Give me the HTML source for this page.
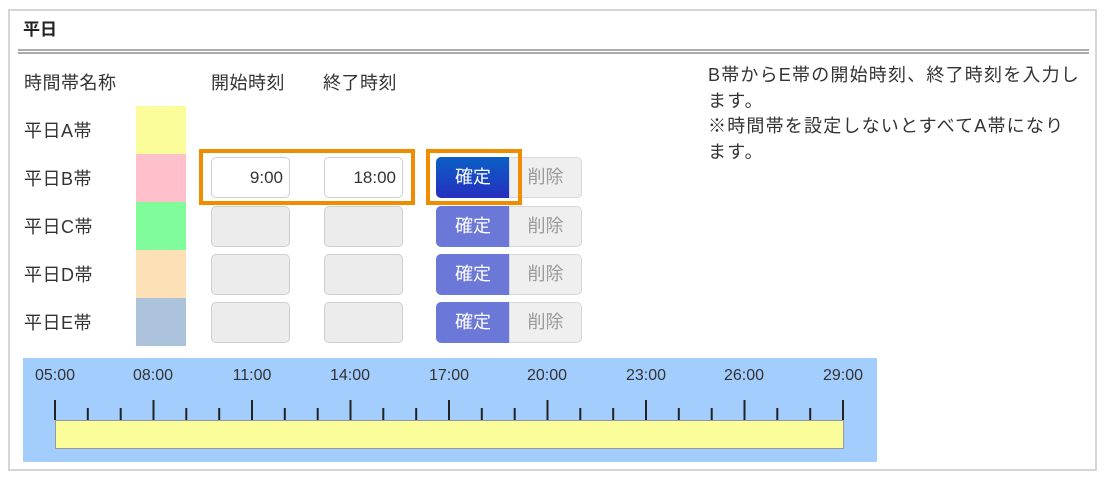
<!DOCTYPE html>
<html><head><meta charset="utf-8"><style>
*{margin:0;padding:0;box-sizing:border-box}
body{width:1105px;height:478px;background:#fff;position:relative;overflow:hidden;font-family:"Liberation Sans","Noto Sans CJK JP",sans-serif;color:#333;font-size:17px}
.a{position:absolute}
.box{left:8px;top:9px;width:1089px;height:462px;border:2px solid #d6d6d6}
.t{line-height:20px;font-size:18px;letter-spacing:0.5px;white-space:nowrap}
.sw{left:136px;width:50px;height:48px}
.inp{width:79px;height:41px;border:1px solid #cfcfcf;border-radius:5px;background:#ececec}
.inp.w{background:#fff;text-align:right;padding-right:6px;line-height:39px;font-size:17px;color:#333}
.ok{left:436px;width:74px;height:41px;background:#6b78d8;color:#fff;border-radius:5px 0 0 5px;text-align:center;line-height:41px;font-size:18px}
.del{left:509px;width:73px;height:41px;background:#efefef;border:1px solid #d8d8d8;border-radius:0 5px 5px 0;color:#999;text-align:center;line-height:39px;font-size:18px}
.or{border:4px solid #f08c00}
.tl{top:367px;font-size:16px;color:#333;width:60px;text-align:center}
</style></head><body>
<div class="a box"></div>
<div class="a t" style="left:23px;top:20px;font-weight:bold;font-size:17px;color:#222;letter-spacing:0">平日</div>
<div class="a" style="left:18px;top:49px;width:1071px;height:5px;border-top:2px solid #aaa;border-bottom:2px solid #aaa"></div>
<div class="a t" style="left:24px;top:73px">時間帯名称</div>
<div class="a t" style="left:211px;top:73px">開始時刻</div>
<div class="a t" style="left:323px;top:73px">終了時刻</div>
<div class="a t" style="left:24px;top:121px">平日A帯</div>
<div class="a t" style="left:24px;top:169px">平日B帯</div>
<div class="a t" style="left:24px;top:217px">平日C帯</div>
<div class="a t" style="left:24px;top:265px">平日D帯</div>
<div class="a t" style="left:24px;top:313px">平日E帯</div>
<div class="a sw" style="top:106px;background:#fbfd9b"></div>
<div class="a sw" style="top:154px;background:#ffc0cb"></div>
<div class="a sw" style="top:202px;background:#80fd9a"></div>
<div class="a sw" style="top:250px;background:#fde0b5"></div>
<div class="a sw" style="top:298px;background:#adc3dc"></div>

<div class="a inp w" style="left:211px;top:157px">9:00</div>
<div class="a inp w" style="left:324px;top:157px">18:00</div>
<div class="a ok" style="top:157px;background:linear-gradient(#0a5fc4,#2630c0)">確定</div>
<div class="a del" style="top:157px">削除</div>

<div class="a inp" style="left:211px;top:206px"></div>
<div class="a inp" style="left:324px;top:206px"></div>
<div class="a ok" style="top:206px">確定</div>
<div class="a del" style="top:206px">削除</div>
<div class="a inp" style="left:211px;top:254px"></div>
<div class="a inp" style="left:324px;top:254px"></div>
<div class="a ok" style="top:254px">確定</div>
<div class="a del" style="top:254px">削除</div>
<div class="a inp" style="left:211px;top:302px"></div>
<div class="a inp" style="left:324px;top:302px"></div>
<div class="a ok" style="top:302px">確定</div>
<div class="a del" style="top:302px">削除</div>

<div class="a or" style="left:199px;top:149px;width:216px;height:56px"></div>
<div class="a or" style="left:426px;top:149px;width:96px;height:56px"></div>

<div class="a" style="left:708px;top:63px;width:390px;font-size:18px;line-height:25.5px;color:#333;white-space:nowrap;letter-spacing:1.2px">B帯からE帯の開始時刻、終了時刻を入力し<br>ます。<br>※時間帯を設定しないとすべてA帯になり<br>ます。</div>

<div class="a" style="left:23px;top:358px;width:854px;height:104px;background:#a3cdfd"></div>
<div class="a tl" style="left:25px">05:00</div>
<div class="a tl" style="left:123px">08:00</div>
<div class="a tl" style="left:222px">11:00</div>
<div class="a tl" style="left:320px">14:00</div>
<div class="a tl" style="left:419px">17:00</div>
<div class="a tl" style="left:517px">20:00</div>
<div class="a tl" style="left:616px">23:00</div>
<div class="a tl" style="left:714px">26:00</div>
<div class="a tl" style="left:813px">29:00</div>
<svg class="a" style="left:0;top:0" width="1105" height="478">
<rect x="55.5" y="420.5" width="788" height="28" fill="#fbfd9b" stroke="#999" stroke-width="1"/>
<g stroke="#222" stroke-width="2">
<line x1="55" y1="400" x2="55" y2="420"/><line x1="87.8" y1="408" x2="87.8" y2="420"/><line x1="120.7" y1="408" x2="120.7" y2="420"/>
<line x1="153.5" y1="400" x2="153.5" y2="420"/><line x1="186.3" y1="408" x2="186.3" y2="420"/><line x1="219.2" y1="408" x2="219.2" y2="420"/>
<line x1="252" y1="400" x2="252" y2="420"/><line x1="284.8" y1="408" x2="284.8" y2="420"/><line x1="317.7" y1="408" x2="317.7" y2="420"/>
<line x1="350.5" y1="400" x2="350.5" y2="420"/><line x1="383.3" y1="408" x2="383.3" y2="420"/><line x1="416.2" y1="408" x2="416.2" y2="420"/>
<line x1="449" y1="400" x2="449" y2="420"/><line x1="481.8" y1="408" x2="481.8" y2="420"/><line x1="514.7" y1="408" x2="514.7" y2="420"/>
<line x1="547.5" y1="400" x2="547.5" y2="420"/><line x1="580.3" y1="408" x2="580.3" y2="420"/><line x1="613.2" y1="408" x2="613.2" y2="420"/>
<line x1="646" y1="400" x2="646" y2="420"/><line x1="678.8" y1="408" x2="678.8" y2="420"/><line x1="711.7" y1="408" x2="711.7" y2="420"/>
<line x1="744.5" y1="400" x2="744.5" y2="420"/><line x1="777.3" y1="408" x2="777.3" y2="420"/><line x1="810.2" y1="408" x2="810.2" y2="420"/>
<line x1="843" y1="400" x2="843" y2="420"/>
</g></svg>
</body></html>
